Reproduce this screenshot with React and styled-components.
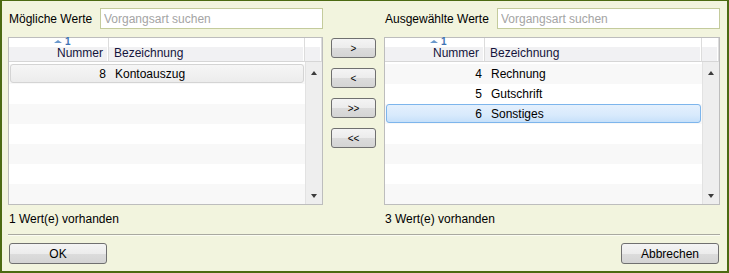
import React from "react";
import styled, { createGlobalStyle } from "styled-components";

const GlobalStyle = createGlobalStyle`
  html, body {
    margin: 0;
    padding: 0;
    background: #f2f4de;
  }
  * {
    box-sizing: border-box;
  }
`;

const Dialog = styled.div`
  width: 729px;
  height: 273px;
  background: #f2f4de;
  border: 2px solid #4c6a12;
  border-top-width: 1px;
  padding: 7px 7px 0 6px;
  display: flex;
  flex-direction: column;
  font-family: "Liberation Sans", Arial, sans-serif;
  font-size: 12px;
  color: #000;
`;

const Main = styled.div`
  display: flex;
  align-items: flex-start;
`;

const Panel = styled.div`
  width: ${(props) => props.width}px;
  display: flex;
  flex-direction: column;
`;

const SearchRow = styled.div`
  display: flex;
  align-items: center;
  justify-content: space-between;
  height: 21px;
  padding-left: 1px;
`;

const Label = styled.span`
  white-space: nowrap;
`;

const SearchInput = styled.input`
  width: 223px;
  height: 21px;
  border: 1px solid #c4cb9c;
  background: #fff;
  padding: 0 3px;
  font-family: inherit;
  font-size: 12px;
  outline: none;
  &::placeholder {
    color: #a4a4a4;
  }
`;

const Table = styled.div`
  margin-top: 8px;
  height: 168px;
  border: 1px solid #bdbdbd;
  background: #fff;
  display: grid;
  grid-template-columns: 100px 1fr 17px;
  grid-template-rows: 24px 1fr;
`;

const HeaderCell = styled.div`
  position: relative;
  display: flex;
  align-items: flex-end;
  justify-content: ${(props) => (props.right ? "flex-end" : "flex-start")};
  padding: 0 5px 1px;
  line-height: 13px;
  background: linear-gradient(#ffffff 0, #ffffff 9px, #f1f1f3 9px);
  border-bottom: 1px solid #d6d6d6;
  border-right: 1px solid #dcdcdc;
  box-shadow: inset -1px 0 0 #ffffff;
  color: #14143c;
  &:last-child {
    border-right: none;
  }
`;

const SortMark = styled.span`
  position: absolute;
  top: 0;
  left: 45px;
  display: flex;
  align-items: flex-start;
  gap: 3px;
  color: #3f73b4;
  font-size: 10px;
  font-weight: bold;
  line-height: 8px;
`;

const SortArrow = styled.span`
  margin-top: 2px;
  width: 0;
  height: 0;
  border-left: 4px solid transparent;
  border-right: 4px solid transparent;
  border-bottom: 3px solid #6a98cc;
`;

const Body = styled.div`
  grid-column: 1 / 3;
  padding-top: 2px;
  display: flex;
  flex-direction: column;
`;

const Row = styled.div`
  height: 20px;
  display: grid;
  grid-template-columns: 100px 1fr;
  align-items: center;
  background: ${(props) => (props.stripe ? "#f8f8f8" : "#fff")};
  padding: 0 1px 1px;
`;

const RowBox = styled.div`
  grid-column: 1 / 3;
  height: 19px;
  padding-top: 1px;
  display: grid;
  grid-template-columns: 99px 1fr;
  align-items: center;
  border-radius: 3px;
  border: 1px solid
    ${(props) =>
      props.state === "selected"
        ? "#7db5ec"
        : props.state === "hover"
        ? "#d4d4d4"
        : "transparent"};
  background: ${(props) =>
    props.state === "selected"
      ? "linear-gradient(#e4f0fd, #d8eafc 60%, #c6e0fa)"
      : props.state === "hover"
      ? "linear-gradient(#f6f6f6, #ececec)"
      : "transparent"};
`;

const NumCell = styled.span`
  text-align: right;
  padding-right: 4px;
`;

const TextCell = styled.span`
  padding-left: 5px;
`;

const ScrollTrack = styled.div`
  background: #eeeeee;
  border-left: 1px solid #e2e2e2;
  display: flex;
  flex-direction: column;
  justify-content: space-between;
  align-items: center;
  padding: 9px 0 6px;
`;

const Arrow = styled.span`
  width: 0;
  height: 0;
  border-left: 3.5px solid transparent;
  border-right: 3.5px solid transparent;
  border-bottom: ${(props) => (props.down ? "none" : "4px solid #3c3c3c")};
  border-top: ${(props) => (props.down ? "4px solid #3c3c3c" : "none")};
`;

const Status = styled.div`
  height: 27px;
  display: flex;
  align-items: center;
  padding: 1px 0 0 1px;
`;

const MoveColumn = styled.div`
  width: 45px;
  margin: 30px 8px 0 8px;
  display: flex;
  flex-direction: column;
  gap: 10px;
`;

const Button = styled.button`
  width: ${(props) => props.width || 45}px;
  height: ${(props) => props.height || 20}px;
  border: 1px solid #707070;
  border-radius: 3px;
  background: linear-gradient(#f4f4f4, #ececec 50%, #dcdcdc 51%, #d4d4d4);
  font-family: "Liberation Sans", Arial, sans-serif;
  font-size: ${(props) => props.fontSize || 10}px;
  color: #000;
  padding: 0;
  cursor: pointer;
`;

const Separator = styled.div`
  margin-top: 2px;
  height: 1px;
  background: #a9a9a0;
  box-shadow: 0 1px 0 #fbfcf2;
`;

const Footer = styled.div`
  margin-top: 8px;
  display: flex;
  justify-content: space-between;
  padding: 0 1px;
`;

function ListTable({ rows }) {
  const filled = [...rows];
  while (filled.length < 7) filled.push(null);
  return (
    <Table>
      <HeaderCell right>
        <SortMark>
          <SortArrow />1
        </SortMark>
        Nummer
      </HeaderCell>
      <HeaderCell>Bezeichnung</HeaderCell>
      <HeaderCell />
      <Body>
        {filled.map((row, i) => (
          <Row key={i} stripe={i % 2 === 0}>
            <RowBox state={row ? row.state : undefined}>
              <NumCell>{row ? row.num : ""}</NumCell>
              <TextCell>{row ? row.name : ""}</TextCell>
            </RowBox>
          </Row>
        ))}
      </Body>
      <ScrollTrack>
        <Arrow />
        <Arrow down />
      </ScrollTrack>
    </Table>
  );
}

const available = [{ num: 8, name: "Kontoauszug", state: "hover" }];
const selected = [
  { num: 4, name: "Rechnung" },
  { num: 5, name: "Gutschrift" },
  { num: 6, name: "Sonstiges", state: "selected" },
];

export default function App() {
  return (
    <>
      <GlobalStyle />
      <Dialog>
        <Main>
          <Panel width={315}>
            <SearchRow>
              <Label>Mögliche Werte</Label>
              <SearchInput placeholder="Vorgangsart suchen" />
            </SearchRow>
            <ListTable rows={available} />
            <Status>1 Wert(e) vorhanden</Status>
          </Panel>
          <MoveColumn>
            <Button>&gt;</Button>
            <Button>&lt;</Button>
            <Button>&gt;&gt;</Button>
            <Button>&lt;&lt;</Button>
          </MoveColumn>
          <Panel width={336}>
            <SearchRow>
              <Label>Ausgewählte Werte</Label>
              <SearchInput placeholder="Vorgangsart suchen" />
            </SearchRow>
            <ListTable rows={selected} />
            <Status>3 Wert(e) vorhanden</Status>
          </Panel>
        </Main>
        <Separator />
        <Footer>
          <Button width={98} height={21} fontSize={12}>
            OK
          </Button>
          <Button width={98} height={21} fontSize={12}>
            Abbrechen
          </Button>
        </Footer>
      </Dialog>
    </>
  );
}
